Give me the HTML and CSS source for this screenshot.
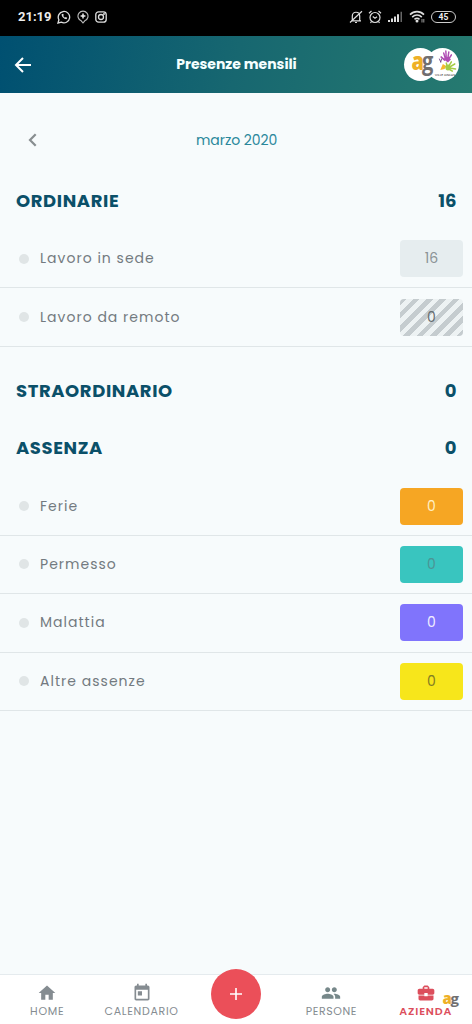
FILE: index.html
```html
<!DOCTYPE html>
<html lang="it">
<head>
<meta charset="utf-8">
<title>Presenze mensili</title>
<link rel="stylesheet" href="styles.css">
</head>
<body>
<div class="app">
  <div class="status">
    <span class="clock">21:19</span>
    <svg class="s-wa" width="14" height="14" viewBox="0 0 14 14" fill="none" stroke="#ddd" stroke-width="1.3"><path d="M1 13l.9-3.2A5.7 5.7 0 1 1 4.3 12.200z"/><path d="M4.700 4.200c-.6 2 2.800 5.400 5 4.900l.5-1.300-1.500-.8-.8.7-1.700-1.700.6-.9-.7-1.400z" fill="#ddd" stroke="none"/></svg>
    <svg class="s-pin" width="12" height="14" viewBox="0 0 12 14" fill="none" stroke="#bbb" stroke-width="1.100"><path d="M4.200 10.800a5 5 0 1 1 3.600 0L6 13z"/><path d="M6 3.600v4.800M3.600 6h4.800" stroke="#eee" stroke-width="1.500"/></svg>
    <svg class="s-ig" width="12" height="12" viewBox="0 0 12 12" fill="none" stroke="#ddd" stroke-width="1.300"><rect x=".8" y=".8" width="10.400" height="10.400" rx="2.800"/><circle cx="6" cy="6" r="2.500"/><circle cx="9" cy="3" r=".4"/></svg>
    <span class="grow"></span>
    <svg width="14" height="14" viewBox="0 0 14 14" fill="none" stroke="#ddd" stroke-width="1.200"><path d="M2 10.800h10M3.300 10.500V6c0-5 7.400-5 7.400 0v4.500M6 12.500h2M1 12.500L13 1.200"/></svg>
    <svg class="s-alarm" width="14" height="14" viewBox="0 0 14 14" fill="none" stroke="#ddd" stroke-width="1.200"><circle cx="7" cy="7.500" r="5"/><path d="M1 3.300L3.500 1M13 3.300L10.500 1M4.800 6.500L7 8.300l2-1.500M3.500 11.500l-1 1.500M10.500 11.500l1 1.500"/></svg>
    <svg class="s-signal" width="15" height="12" viewBox="0 0 15 12" fill="#ddd"><path d="M0 9h2v2H0zM3 7.500h2V11H3zM6 5.500h2V11H6zM9 3.300h2V11H9z"/><path d="M12.500.8h1.500V11h-1.500z" fill="#666"/></svg>
    <svg class="s-wifi" width="16" height="13" viewBox="0 0 16 13" fill="none" stroke="#ddd" stroke-width="1.600"><path d="M1 4.600c4-4 10-4 14 0M3.200 7.100c2.800-2.800 6.800-2.800 9.600 0M5.500 9.400c1.500-1.400 3.500-1.400 5 0"/><circle cx="8" cy="11" r=".7" fill="#ddd"/><path d="M13 9v3.500M14.800 9v3.500" stroke="#999" stroke-width="1"/></svg>
    <span class="battery">45</span>
  </div>

  <header class="header">
    <svg class="back" width="18" height="18" viewBox="0 0 18 18" fill="none" stroke="#fff" stroke-width="2"><path d="M17 9H2.500M9 2L2 9l7 7"/></svg>
    <h1 class="title">Presenze mensili</h1>
    <div class="avatars">
      <div class="avatar"><span class="ag"><b>a</b><i>g</i></span></div>
      <div class="avatar second">
        <svg width="32" height="32" viewBox="0 0 32 32" fill="none" stroke-linecap="round"><g stroke="#b04db4" stroke-width="1.700"><path d="M15 13L11 10M16 12l-2-6M17 11l-.5-7M19 11l1-6M20 12l3-4"/></g><path d="M13.500 12l6-2.500 3 3-3.500 3z" fill="#b04db4"/><path d="M9 12l1.500 3M10.500 15l1-3" stroke="#6d4388"/><path d="M10 23l3-6 4 2-2 3z" fill="#f4b92e"/><g stroke="#a4cc46" stroke-width="1.700"><path d="M20 19l3-4M21 20l6-3M21 21l7 1M20 22l4 2M18 19l-1-3"/></g><circle cx="19" cy="20.500" r="3" fill="#a4cc46"/></svg>
        <span class="tag">VILLE ONLUS</span>
      </div>
    </div>
  </header>

  <main class="content">
    <div class="month">
      <svg class="prev" width="9" height="14" viewBox="0 0 9 14" fill="none" stroke="#888e90" stroke-width="2.200"><path d="M7.700 1.200L2 7l5.700 5.800"/></svg>
      <span class="month-name">marzo 2020</span>
    </div>

    <section class="group">
      <h2 class="group-head"><span>ORDINARIE</span><span class="sum">16</span></h2>
      <div class="row"><i class="dot"></i><span class="label">Lavoro in sede</span><span class="badge office">16</span></div>
      <div class="row"><i class="dot"></i><span class="label">Lavoro da remoto</span><span class="badge remote">0</span></div>
    </section>

    <section class="group overtime">
      <h2 class="group-head"><span>STRAORDINARIO</span><span class="sum">0</span></h2>
    </section>

    <section class="group absence">
      <h2 class="group-head"><span>ASSENZA</span><span class="sum">0</span></h2>
      <div class="row"><i class="dot"></i><span class="label">Ferie</span><span class="badge holiday">0</span></div>
      <div class="row"><i class="dot"></i><span class="label">Permesso</span><span class="badge leave">0</span></div>
      <div class="row"><i class="dot"></i><span class="label">Malattia</span><span class="badge sick">0</span></div>
      <div class="row"><i class="dot"></i><span class="label">Altre assenze</span><span class="badge other">0</span></div>
    </section>
  </main>

  <nav class="nav">
    <div class="tab"><svg width="20" height="20" viewBox="0 0 24 24" fill="#858c91"><path d="M10 20v-6h4v6h5v-8h3L12 3 2 12h3v8z"/></svg><span>HOME</span></div>
    <div class="tab"><svg width="20" height="20" viewBox="0 0 24 24" fill="#858c91"><path d="M19 3h-1V1h-2v2H8V1H6v2H5c-1.110 0-2 .9-2 2v14c0 1.100.89 2 2 2h14c1.100 0 2-.9 2-2V5c0-1.100-.9-2-2-2zm0 16H5V8h14v11zM7 10h5v5H7z"/></svg><span>CALENDARIO</span></div>
    <div class="tab"><div class="add"><svg width="14" height="14" viewBox="0 0 14 14" fill="none" stroke="#fff" stroke-width="1.600"><path d="M7 1v12M1 7h12"/></svg></div></div>
    <div class="tab right"><svg width="20" height="20" viewBox="0 0 24 24" fill="#77888a"><path d="M16 11c1.660 0 2.990-1.340 2.990-3S17.660 5 16 5s-3 1.340-3 3 1.340 3 3 3zm-8 0c1.660 0 2.990-1.340 2.990-3S9.660 5 8 5 5 6.340 5 8s1.340 3 3 3zm0 2c-2.330 0-7 1.170-7 3.500V19h14v-2.500c0-2.330-4.670-3.500-7-3.500zm8 0c-.29 0-.62.020-.97.050 1.160.84 1.970 1.970 1.970 3.450V19h6v-2.500c0-2.330-4.670-3.500-7-3.500z"/></svg><span>PERSONE</span></div>
    <div class="tab right active"><svg width="20" height="20" viewBox="0 0 24 24" fill="#dc4e5c"><path d="M10 16v-1H3.010L3 19c0 1.110.89 2 2 2h14c1.110 0 2-.89 2-2v-4h-7v1h-4zm10-9h-4.010V5l-2-2h-4l-2 2v2H4c-1.100 0-2 .9-2 2v3c0 1.110.89 2 2 2h6v-2h4v2h6c1.100 0 2-.9 2-2V9c0-1.100-.9-2-2-2zm-6 0h-4V5h4v2z"/></svg><span>AZIENDA</span><span class="ag small"><b>a</b><i>g</i></span></div>
  </nav>
</div>
</body>
</html>
```
FILE: styles.css
```css
* { box-sizing: border-box; }
body { margin: 0; background: #f7fbfc; font-family: Poppins, Inter, "Liberation Sans", sans-serif; }
svg { display: block; flex: none; }
.app { width: 472px; height: 1024px; display: flex; flex-direction: column; background: #f7fbfc; overflow: hidden; }

.status { height: 36px; background: #000; display: flex; align-items: center; padding: 0 16px 3px 18px; }
.clock { font: 700 13px Roboto, sans-serif; color: #eee; width: 39px; white-space: nowrap; }
.s-pin { margin-left: 6px; }
.s-ig { margin-left: 6px; }
.grow { flex: 1; }
.s-alarm { margin-left: 5px; }
.s-signal { margin-left: 6px; }
.s-wifi { margin-left: 6px; }
.battery { margin-left: 6px; width: 25px; height: 12px; border: 1.5px solid #ccc; border-radius: 6px; font: 700 8.5px/10px Roboto, sans-serif; color: #eee; text-align: center; }

.header { height: 57px; display: flex; align-items: center; padding: 0 13px 0 14px; background: linear-gradient(100deg, #005071 0%, #176770 50%, #267a70 100%); }
.back { width: 18px; }
.title { flex: 1; margin: 0; padding: 0 0 2px 37px; text-align: center; color: #f5ffff; font-size: 14px; line-height: 20px; font-weight: 700; letter-spacing: -0.03px; }
.avatars { display: flex; width: 55px; }
.avatar { width: 33px; height: 33px; border-radius: 50%; background: #fff; flex: none; display: flex; align-items: center; justify-content: center; }
.second { margin-left: -11px; position: relative; }
.second svg { margin-top: -3px; transform: scaleX(0.85); transform-origin: right; }
.tag { position: absolute; bottom: 4px; left: 7px; width: 24px; font-size: 3.5px; font-weight: 500; color: #555; white-space: nowrap; text-align: center; }
.ag { display: flex; font: 700 25px/25px "Open Sans", sans-serif; letter-spacing: -2.5px; z-index: 2; }
.ag b { color: #eeb027; }
.ag i { color: #716f70; font-style: normal; font-weight: 700; }
.avatar .ag { margin: -8px 0 0 1px; transform: scaleX(0.8); }

.content { flex: 1; }
.month { height: 94px; display: flex; align-items: center; padding-left: 28px; }
.prev { margin-right: 159px; }
.month-name { font-size: 14px; color: #29879b; letter-spacing: -0.05px; }
.group-head { margin: 0; height: 43px; padding: 0 15.5px 0 16px; display: flex; justify-content: space-between; align-items: flex-start; font-size: 18px; line-height: 28px; font-weight: 700; letter-spacing: 0.6px; color: #0b5069; }
.sum { letter-spacing: 0; }
.row { height: 58.4px; border-bottom: 1px solid #e0e6e8; display: flex; align-items: center; padding: 0 9px 0 19px; }
.dot { width: 10px; height: 10px; border-radius: 50%; background: #e0e5e6; margin-right: 11px; }
.label { font-size: 14px; color: #737a80; letter-spacing: 1.02px; white-space: nowrap; }
.badge { margin-left: auto; width: 63px; height: 37px; border-radius: 4px; display: flex; align-items: center; justify-content: center; font-size: 14px; color: #777f83; }
.office { background: #e6edef; color: #8b9396; }
.remote { background: repeating-linear-gradient(135deg, #c5cccf 0 4.7px, #edf2f3 4.7px 9.4px); color: #666c70; }
.holiday { background: #f6a623; color: #fff0c5; }
.leave { background: #39c5bf; color: #4c9494; }
.sick { background: #8074fc; color: #f2efff; }
.other { background: #f7e61b; color: #817c24; }
.overtime { padding-top: 30px; }
.absence { padding-top: 14px; }
.absence .group-head { height: 43.6px; }

.nav { height: 50px; background: #fff; border-top: 1px solid #e5ebee; display: grid; grid-template-columns: repeat(5, 1fr); }
.tab { display: flex; flex-direction: column; align-items: center; padding-top: 8px; color: #858c91; font-size: 11px; line-height: 16px; letter-spacing: 0.7px; position: relative; }
.tab > span { white-space: nowrap; }
.tab.right { padding-left: 2px; letter-spacing: 0.6px; }
.add { width: 50px; height: 50px; border-radius: 50%; background: #eb4f59; margin-top: -14px; margin-left: 1px; display: flex; align-items: center; justify-content: center; }
.tab.active { color: #dc4e5c; font-weight: 600; letter-spacing: 0.85px; }
.tab .small { position: absolute; left: 65px; top: 16px; font-size: 15px; line-height: 15px; letter-spacing: -1.5px; }
```
